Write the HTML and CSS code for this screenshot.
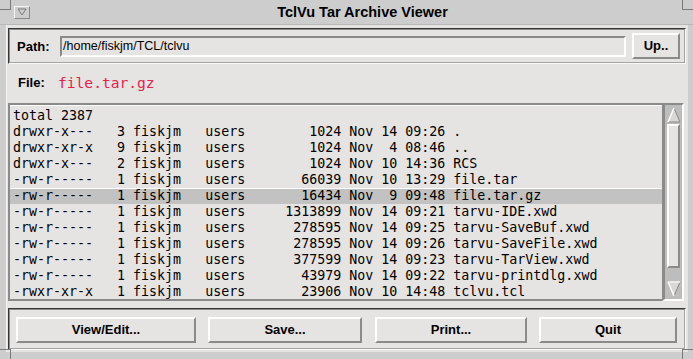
FILE: index.html
```html
<!DOCTYPE html>
<html>
<head>
<meta charset="utf-8">
<link rel="stylesheet" href="styles.css">
</head>
<body>
<div class="window">
  <div class="corner tl"></div>
  <div class="corner tr"></div>
  <div class="corner bl"></div>
  <div class="corner br"></div>
  <div class="titlebar">
    <div class="menubtn"><svg width="10" height="8" viewBox="0 0 10 8"><path d="M1 1 L9 1 L5 7 Z" fill="none" stroke="#7a7a7a" stroke-width="1"/></svg></div>
    <div class="title">TclVu Tar Archive Viewer</div>
  </div>
  <div class="client">
    <div class="pathframe">
      <span class="label">Path:</span>
      <div class="entry">/home/fiskjm/TCL/tclvu</div>
      <div class="btn up">Up..</div>
    </div>
    <div class="filerow">
      <span class="label">File:</span>
      <span class="filename">file.tar.gz</span>
    </div>
    <div class="listarea">
      <div class="listbox">
<div class="row">total 2387</div>
<div class="row">drwxr-x---   3 fiskjm   users        1024 Nov 14 09:26 .</div>
<div class="row">drwxr-xr-x   9 fiskjm   users        1024 Nov  4 08:46 ..</div>
<div class="row">drwxr-x---   2 fiskjm   users        1024 Nov 10 14:36 RCS</div>
<div class="row">-rw-r-----   1 fiskjm   users       66039 Nov 10 13:29 file.tar</div>
<div class="row sel">-rw-r-----   1 fiskjm   users       16434 Nov  9 09:48 file.tar.gz</div>
<div class="row">-rw-r-----   1 fiskjm   users     1313899 Nov 14 09:21 tarvu-IDE.xwd</div>
<div class="row">-rw-r-----   1 fiskjm   users      278595 Nov 14 09:25 tarvu-SaveBuf.xwd</div>
<div class="row">-rw-r-----   1 fiskjm   users      278595 Nov 14 09:26 tarvu-SaveFile.xwd</div>
<div class="row">-rw-r-----   1 fiskjm   users      377599 Nov 14 09:23 tarvu-TarView.xwd</div>
<div class="row">-rw-r-----   1 fiskjm   users       43979 Nov 14 09:22 tarvu-printdlg.xwd</div>
<div class="row">-rwxr-xr-x   1 fiskjm   users       23906 Nov 10 14:48 tclvu.tcl</div>
      </div>
      <div class="scrollbar">
        <div class="arrow"><svg width="14" height="16" viewBox="0 0 14 16"><path d="M7 1 L13 15 L1 15 Z" fill="#d9d6d6"/><path d="M7 1 L13 15 L1 15" fill="none" stroke="#8a8a8a" stroke-width="1" /><path d="M7 1 L1 15" stroke="#ffffff" stroke-width="1.5"/></svg></div>
        <div class="slider"></div>
        <div class="trough"></div>
        <div class="arrow"><svg width="14" height="16" viewBox="0 0 14 16"><path d="M1 1 L13 1 L7 15 Z" fill="#d9d6d6"/><path d="M1 1 L13 1 L7 15" fill="none" stroke="#8a8a8a" stroke-width="1"/><path d="M1 1 L13 1 M1 1 L7 15" stroke="#ffffff" stroke-width="1.5"/></svg></div>
      </div>
    </div>
    <div class="buttonframe">
      <div class="btn b1">View/Edit...</div>
      <div class="btn b2">Save...</div>
      <div class="btn b3">Print...</div>
      <div class="btn b4">Quit</div>
    </div>
  </div>
</div>
</body>
</html>
```
FILE: styles.css
```css
html, body {
  margin: 0;
  padding: 0;
  background: #cdcdcd;
}
.window {
  position: relative;
  width: 693px;
  height: 359px;
  background: #cdcdcd;
  font-family: "Liberation Sans", Arial, sans-serif;
  color: #000;
  overflow: hidden;
}
.corner {
  position: absolute;
  width: 10px;
  height: 9px;
}
.corner.tl { left: 0; top: 0; border-right: 1px solid #7a7a7a; border-bottom: 1px solid #7a7a7a; }
.corner.tr { right: 0; top: 0; border-left: 1px solid #7a7a7a; border-bottom: 1px solid #7a7a7a; }
.corner.bl { left: 0; bottom: 0; border-right: 1px solid #7a7a7a; border-top: 1px solid #7a7a7a; }
.corner.br { right: 0; bottom: 0; border-left: 1px solid #7a7a7a; border-top: 1px solid #7a7a7a; }

.titlebar {
  height: 24px;
  display: flex;
  align-items: center;
  position: relative;
  border-bottom: 1px solid #b8b8b8;
}
.menubtn {
  margin-left: 14px;
  width: 14px;
  height: 11px;
  border-top: 1px solid #f4f4f4;
  border-left: 1px solid #f4f4f4;
  border-right: 1px solid #8a8a8a;
  border-bottom: 1px solid #8a8a8a;
  display: flex;
  align-items: center;
  justify-content: center;
}
.title {
  flex: 1;
  text-align: center;
  font-weight: bold;
  font-size: 14.5px;
  margin-left: 2px;
}

.client {
  margin: 0 5px 0 6px;
  height: 327px;
  background: #e6e3e3;
  border-left: 1px solid #f4f4f4;
  display: flex;
  flex-direction: column;
  padding: 3px 2px 0 1px;
  box-sizing: border-box;
}
.label {
  font-weight: bold;
  font-size: 13px;
}

.pathframe {
  height: 36px;
  box-sizing: border-box;
  border: 2px groove #f4f4f4;
  border-color: #8a8a8a #f8f8f8 #f8f8f8 #8a8a8a;
  border-style: groove;
  display: flex;
  align-items: center;
  padding-left: 7px;
}
.pathframe .label { width: 43px; }
.entry {
  width: 566px;
  height: 21px;
  box-sizing: border-box;
  border-top: 2px solid #8a8a8a;
  border-left: 2px solid #8a8a8a;
  border-right: 2px solid #ffffff;
  border-bottom: 2px solid #ffffff;
  font-size: 12.5px;
  line-height: 17px;
  padding-left: 1px;
  margin-top: 1px;
}
.btn {
  box-sizing: border-box;
  height: 26px;
  border-top: 2px solid #ffffff;
  border-left: 2px solid #ffffff;
  border-right: 2px solid #8a8a8a;
  border-bottom: 2px solid #8a8a8a;
  font-weight: bold;
  font-size: 13px;
  display: flex;
  align-items: center;
  justify-content: center;
  padding-bottom: 1px;
}
.btn.up {
  width: 48px;
  margin-left: 6px;
}

.filerow {
  height: 39px;
  display: flex;
  align-items: center;
  padding-left: 10px;
  padding-bottom: 2px;
  box-sizing: border-box;
}
.filerow .label { width: 40px; }
.filename {
  font-family: "DejaVu Sans Mono", monospace;
  font-size: 14.6px;
  color: #e8204a;
}

.listarea {
  height: 198px;
  display: flex;
  margin-right: 1px;
}
.listbox {
  width: 654px;
  box-sizing: border-box;
  border-top: 2px solid #8a8a8a;
  border-left: 2px solid #8a8a8a;
  border-bottom: 2px solid #8a8a8a;
  border-right: 0;
  padding: 3px 0 0 0;
  font-family: "DejaVu Sans Mono", monospace;
  font-size: 13.3px;
  overflow: hidden;
  box-shadow: inset 0 1px 0 #ffffff;
}
.row {
  height: 16px;
  line-height: 16px;
  white-space: pre;
  padding-left: 3px;
}
.row.sel {
  background: #c2c2c2;
  box-shadow: inset 0 1px 0 #ffffff;
}
.scrollbar {
  width: 22px;
  box-sizing: border-box;
  border-top: 2px solid #8a8a8a;
  border-left: 3px solid #8a8a8a;
  border-right: 2px solid #ffffff;
  border-bottom: 2px solid #ffffff;
  background: #bdbdbd;
  display: flex;
  flex-direction: column;
  align-items: center;
  padding: 2px 0;
}
.arrow {
  width: 14px;
  height: 16px;
}
.arrow svg { display: block; }
.slider {
  width: 13px;
  height: 144px;
  box-sizing: border-box;
  background: #e6e3e3;
  border-top: 2px solid #ffffff;
  border-left: 2px solid #ffffff;
  border-right: 2px solid #8a8a8a;
  border-bottom: 2px solid #8a8a8a;
  margin-top: 1px;
}
.trough { flex: 1; }

.buttonframe {
  margin-top: 7px;
  height: 42px;
  box-sizing: border-box;
  border: 2px groove #f4f4f4;
  border-color: #8a8a8a #f8f8f8 #f8f8f8 #8a8a8a;
  display: flex;
  padding: 7px 0 0 6px;
}
.btn.b1 { width: 180px; }
.btn.b2 { width: 154px; margin-left: 12px; }
.btn.b3 { width: 152px; margin-left: 13px; }
.btn.b4 { width: 138px; margin-left: 12px; }
```
